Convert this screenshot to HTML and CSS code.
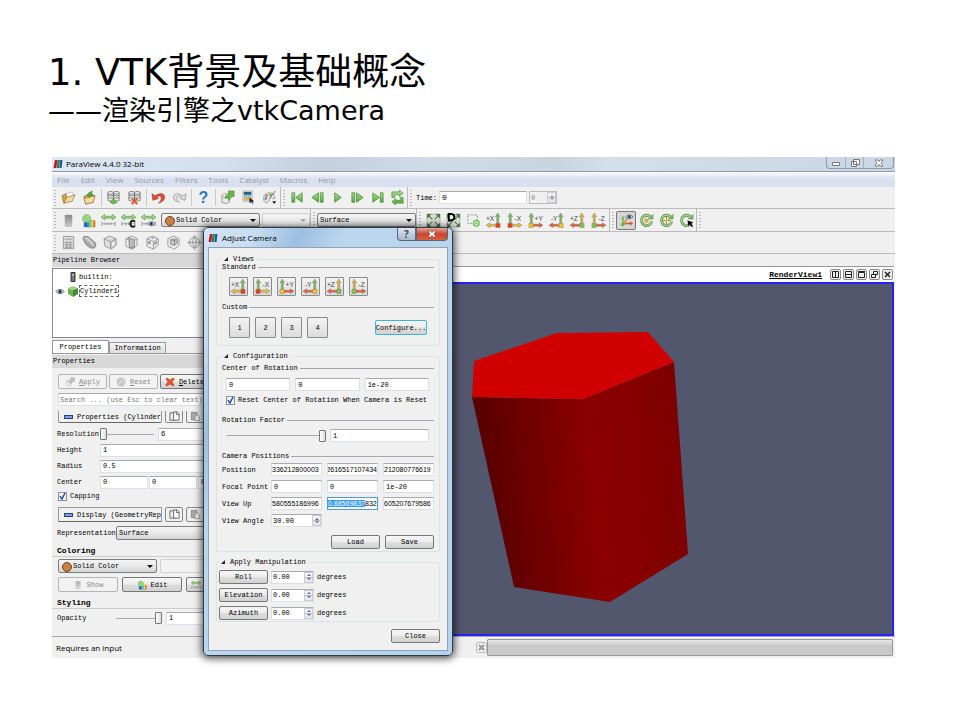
FILE: index.html
```html
<!DOCTYPE html>
<html lang="zh-CN">
<head>
    <meta charset="UTF-8">
    <meta name="viewport" content="width=device-width, initial-scale=1.0">
    <title>VTK背景及基础概念</title>
    <link rel="stylesheet" href="styles.css">
</head>
<body>
    <!-- shared icons -->
    <svg class="defs" aria-hidden="true">
        <defs>
            <linearGradient id="green" x1="0" y1="0" x2="0" y2="1"><stop offset="0" stop-color="#b5dc9c"/><stop offset="1" stop-color="#55a83a"/></linearGradient>
            <linearGradient id="grey" x1="0" y1="0" x2="0" y2="1"><stop offset="0" stop-color="#888"/><stop offset="1" stop-color="#ccc"/></linearGradient>
            <linearGradient id="rainbow"><stop offset="0" stop-color="#1b4fd0"/><stop offset=".4" stop-color="#35c4c0"/><stop offset=".7" stop-color="#f3d62a"/><stop offset="1" stop-color="#e8501c"/></linearGradient>
            <linearGradient id="side" gradientUnits="userSpaceOnUse" x1="35" y1="200" x2="230" y2="180"><stop offset="0" stop-color="#5a0000"/><stop offset=".55" stop-color="#8c0000"/><stop offset="1" stop-color="#7d0000"/></linearGradient>
        </defs>
        <symbol id="logo" viewBox="0 0 10 9"><path fill="#c8102e" d="M1.500 0h3L3 9H0z"/><path fill="#1f8a3b" d="M4.700 0h2.500L6 9H3.400z"/><path fill="#234f9e" d="M7.500 0H10L9 9H6.500z"/></symbol>
        <symbol id="folder" viewBox="0 0 16 16"><path fill="#fff" stroke="#999" stroke-width=".6" d="M5 4l7-2 2 5-8 3z"/><path fill="#d3a84f" stroke="#8a6a2c" stroke-width=".7" d="M1 6l4-2 1 3-2 7-1 0z"/><path fill="#f3dc9f" stroke="#8a6a2c" stroke-width=".7" d="M6 8l9-3-3 7-9 2z"/></symbol>
        <symbol id="folder-in" viewBox="0 0 16 16"><path fill="#d3a84f" stroke="#8a6a2c" stroke-width=".7" d="M2 7l4-2 7 1-1 7-8 2z"/><path fill="#f3dc9f" stroke="#8a6a2c" stroke-width=".7" d="M2 9l12-3-2 7-8 2z"/><path fill="#57ad35" stroke="#2f7a1d" stroke-width=".5" d="M8 8L5 5l2-.5V3l4-2-1 3 2 .5z"/></symbol>
        <symbol id="servers" viewBox="0 0 16 16"><g fill="#eee" stroke="#666" stroke-width=".8"><path d="M2 3v8q3 2 6 0V3"/><path d="M8 3v8q3 2 6 0V3"/><ellipse cx="5" cy="3" rx="3" ry="1.500"/><ellipse cx="11" cy="3" rx="3" ry="1.500"/><path fill="none" d="M2 5.500q3 2 6 0q3 2 6 0M2 8q3 2 6 0q3 2 6 0"/></g></symbol>
        <symbol id="undo" viewBox="0 0 16 16"><path fill="#df4f32" stroke="#9d2f1c" stroke-width=".6" d="M1 4l1 7 6-2-2-1.500q4-2.500 5 .5q.5 3-3 6q7-2 6.500-7Q13 1 4.500 6z"/></symbol>
        <symbol id="redo" viewBox="0 0 16 16"><path fill="#ddd" stroke="#999" stroke-width=".8" d="M15 4l-1 7-6-2 2-1.500q-4-2.500-5 .5q-.5 3 3 5q-7-1-6.500-6Q3 1 11.500 6z"/></symbol>
        <symbol id="source" viewBox="0 0 16 16"><path fill="#e9e9e9" stroke="#777" stroke-width=".7" d="M2 6v7q4 3 8 0V6"/><ellipse cx="6" cy="6" rx="4" ry="2" fill="#f8f8f8" stroke="#777" stroke-width=".7"/><path fill="#69b54b" stroke="#3d7f27" stroke-width=".6" d="M9 1h6v6h-2l-4 4v-3l-3 1V6l3-1z"/></symbol>
        <symbol id="pick" viewBox="0 0 16 16"><path fill="#8fc6cf" d="M3 2h8v9H3z"/><path fill="#315e82" d="M3 2h8v3H3z"/><path fill="#e8b04c" d="M3 8h8v3H3z"/><path stroke="#888" fill="none" stroke-dasharray="1 1" d="M2 1h10v11H2z"/><path fill="#222" d="M9 8l5 4-2 .4 1 2-1 .5-1-2-2 1z"/></symbol>
        <symbol id="palette" viewBox="0 0 16 16"><path fill="#e4e4e4" stroke="#888" stroke-width=".7" d="M2 12Q0 3 8 3q6 0 6 6-2 1-4-1-2 0-2 2t-3 4z"/><circle cx="5" cy="6" r="1.300" fill="#e64a2c"/><circle cx="4" cy="9" r="1.300" fill="#3f7fd2"/><circle cx="9" cy="5" r="1.300" fill="#5ab339"/><path stroke="#666" d="M14 1L8 9"/><path fill="#111" d="M11 12h4l-2 3z"/></symbol>
        <symbol id="first" viewBox="0 0 16 16"><path fill="url(#green)" stroke="#468c32" stroke-width=".8" d="M2 3h3v10H2zM13 3v10L6 8z"/></symbol>
        <symbol id="prev" viewBox="0 0 16 16"><path fill="url(#green)" stroke="#468c32" stroke-width=".8" d="M11 3h3v10h-3zM9 3v10L2 8z"/></symbol>
        <symbol id="play" viewBox="0 0 16 16"><path fill="url(#green)" stroke="#468c32" stroke-width=".8" d="M5 3v10l7-5z"/></symbol>
        <symbol id="next" viewBox="0 0 16 16"><path fill="url(#green)" stroke="#468c32" stroke-width=".8" d="M2 3h3v10H2zM7 3v10l7-5z"/></symbol>
        <symbol id="last" viewBox="0 0 16 16"><path fill="url(#green)" stroke="#468c32" stroke-width=".8" d="M11 3h3v10h-3zM3 3v10l7-5z"/></symbol>
        <symbol id="loop" viewBox="0 0 16 16"><path fill="url(#green)" stroke="#468c32" stroke-width=".7" d="M2 8V2h8V0l4 3.500L10 7V5H5v3zM14 8v6H6v2l-4-3.500L6 9v2h5V8z"/></symbol>
        <symbol id="bar" viewBox="0 0 16 16"><path fill="url(#grey)" d="M4 2h8v13H4z"/></symbol>
        <symbol id="cmap" viewBox="0 0 16 16"><path fill="url(#rainbow)" stroke="#876" stroke-width=".4" d="M5 8h10v7H5z"/><circle cx="6" cy="6" r="4.500" fill="#97d283" stroke="#69ab55" stroke-width=".5"/><path fill="#2d62c8" d="M3 10h3v5H3z"/></symbol>
        <symbol id="range" viewBox="0 0 16 16"><path fill="#9bd283" stroke="#4e9a39" stroke-width=".6" d="M0 4.500L4 1.500v2h8v-2l4 3-4 3v-2H4v2z"/><path fill="none" stroke="#888" stroke-width=".8" d="M1 9v5M5 10v3M8 10v3M11 10v3M15 9v5M1 11.500h14"/></symbol>
        <symbol id="eye" viewBox="0 0 16 10"><path fill="#ddd" stroke="#444" d="M1 5q7-7 14 0q-7 7-14 0z"/><circle cx="8" cy="5" r="3" fill="#345a8c"/><circle cx="8" cy="5" r="1.300" fill="#111"/></symbol>
        <symbol id="fit" viewBox="0 0 16 16"><path fill="#d8d8d8" stroke="#aaa" stroke-width=".6" d="M1 1h14v14H1z"/><path stroke="#4b7d37" stroke-width="1.200" d="M3 3l10 10M13 3L3 13"/><path fill="#4b7d37" d="M1 1h5L1 6zM15 1v5l-5-5zM1 15v-5l5 5zM15 15h-5l5-5z"/><circle cx="8" cy="8" r="1.500" fill="#eee"/></symbol>
        <symbol id="zoombox" viewBox="0 0 16 16"><path fill="none" stroke="#888" stroke-dasharray="2 1.500" d="M2 2h10v9H2z"/><circle cx="11" cy="11" r="3" fill="#fff" stroke="#6cbf4f" stroke-width="1.500"/><path stroke="#6cbf4f" d="M9.500 11h3M11 9.500v3"/></symbol>
        <!-- camera axis icons, colours come from the axis class -->
        <symbol id="axis-left" viewBox="0 0 16 16"><g stroke="#777" stroke-width=".5"><path fill="var(--up)" d="M12.500 0L15 4h-1.500v7h-2V4H10z"/><path fill="var(--across)" d="M0 13l4-2.500V12h7v2H4v1.500z"/><path fill="var(--corner)" d="M10.500 11h4.500v4.500h-4.500z"/></g></symbol>
        <symbol id="axis-right" viewBox="0 0 16 16"><g stroke="#777" stroke-width=".5"><path fill="var(--up)" d="M3.500 0L6 4H4.500v7h-2V4H1z"/><path fill="var(--across)" d="M16 13l-4-2.500V12H5v2h7v1.500z"/><path fill="var(--corner)" d="M1 11h4.500v4.500H1z"/></g></symbol>
        <symbol id="orient" viewBox="0 0 16 16"><path fill="#68b34b" d="M4 3l2 3H5v5H3.500V6H2z"/><path fill="#e4502b" d="M15 11l-3-2v1.500H6V12h6v1.500z"/><path stroke="#c89628" stroke-width="1.500" d="M4 12l5-6"/><circle cx="4" cy="12" r="2" fill="#68b34b"/><path fill="#ccc" stroke="#334" stroke-width=".6" d="M7 4q4-4 8 0q-4 4-8 0z"/><circle cx="11" cy="4" r="1.500" fill="#23406c"/></symbol>
        <symbol id="rotate" viewBox="0 0 16 16"><path fill="none" stroke="#568c43" stroke-width="3" d="M12 4a5.500 5.500 0 1 0 1.500 5"/><path fill="none" stroke="#a9d597" stroke-width="1.500" d="M12 4a5.500 5.500 0 1 0 1.500 5"/><path fill="#7cb868" stroke="#568c43" stroke-width=".6" d="M10 6.500h5V1.500z"/></symbol>
        <symbol id="calc" viewBox="0 0 16 16"><path fill="#ddd" stroke="#999" d="M2.500 1.500h11v13h-11z"/><path fill="none" stroke="#999" d="M4 4.500h8M4 8h8M4 10.500h8M4 13h8M6 7v7M10 7v7"/></symbol>
        <symbol id="contour" viewBox="0 0 16 16"><path fill="#aaa" stroke="#888" d="M1 4q0-4 6-2l7 6q2 4-1 6-4 1-9-4z"/><path fill="none" stroke="#e8e8e8" d="M3 4q3-2 6 2t3 6M5 5q2 0 3 2t3 3"/></symbol>
        <symbol id="cube" viewBox="0 0 16 16"><path fill="#ddd" stroke="#999" d="M1 4l6-3 7 3v7l-5 4-7-3zM1 4l7 3v8M8 7l6-3"/><path fill="#f4f4f4" stroke="#999" stroke-width=".6" d="M9 8l4-2v5l-4 2z"/></symbol>
        <symbol id="slice" viewBox="0 0 16 16"><path fill="#eee" stroke="#999" d="M2 4l6-3 6 3v7l-5 4-7-3zM2 4l7 3v8M9 7l5-3"/><path fill="#bbb" stroke="#888" d="M5 3l6 2v8l-5 1z"/></symbol>
        <symbol id="threshold" viewBox="0 0 16 16"><path fill="#eee" stroke="#999" d="M2 4l6-3 6 3v7l-5 4-7-3zM2 4l7 3v8M9 7l5-3"/><path fill="#999" d="M3 6l3 1v3l-3-1zM10 8l3-2v3l-3 2zM6 3l3-1 2 1-3 1z"/></symbol>
        <symbol id="subset" viewBox="0 0 16 16"><path fill="#eee" stroke="#999" d="M2 4l6-3 6 3v7l-5 4-7-3z"/><path fill="#ccc" stroke="#888" d="M5 5l4-1 3 1v4l-3 2-4-1zM5 5l4 1v5M9 6l3-1"/></symbol>
        <symbol id="sphere" viewBox="0 0 16 16"><path fill="#aaa" d="M8 0l2 3H6zM8 16l2-3H6zM0 8l3-2v4zM16 8l-3-2v4z"/><circle cx="8" cy="8" r="5.500" fill="#e6e6e6" stroke="#999"/><path fill="none" stroke="#999" d="M8 2.500q-4 5 0 11q4-6 0-11M2.500 8h11"/></symbol>
        <symbol id="green-cube" viewBox="0 0 12 12"><path fill="#6fb256" d="M1 3l5 2v7l-5-3z"/><path fill="#458a30" d="M6 5l5-2v6l-5 3z"/><path fill="#9bd384" d="M1 3l5-2 5 2-5 2z"/></symbol>
        <symbol id="copy" viewBox="0 0 12 12"><path fill="#eee" stroke="#555" stroke-width=".9" d="M1 2h4l2 2v6H1z"/><path fill="#fff" stroke="#555" stroke-width=".9" d="M5 1h4l2 2v7H5zM8 1v3h3"/></symbol>
        <symbol id="paste" viewBox="0 0 12 12"><path fill="#aaa" stroke="#888" d="M1.500 1.500h6v8h-6z"/><path fill="#eee" stroke="#999" d="M5.500 4.500h3l2 2v4h-5z"/></symbol>
        <symbol id="cross" viewBox="0 0 10 10"><path fill="#e8552f" stroke="#9f3418" stroke-width=".5" d="M1 2l1-1 3 2 3-2 1.500 1L7 5l2 3-1 1-3-2-3 2-1.500-1L3 5z"/></symbol>
        <symbol id="tick" viewBox="0 0 9 9"><path fill="none" stroke="#2d4f9e" stroke-width="1.500" d="M2 4l2 3 3-6"/></symbol>
    </svg>

    <header class="slide-title">
        <h1>1. VTK背景及基础概念</h1>
        <h2>——渲染引擎之vtkCamera</h2>
    </header>

    <main class="window">
        <div class="titlebar">
            <svg class="logo"><use href="#logo"/></svg>
            <span>ParaView 4.4.0 32-bit</span>
            <div class="caption-buttons">
                <button aria-label="Minimize"><svg viewBox="0 0 10 8"><path fill="#fff" stroke="#777" d="M1.500 3.500h7v3h-7z"/></svg></button>
                <button aria-label="Restore"><svg viewBox="0 0 10 8"><path fill="#fff" stroke="#777" d="M3.500.5h6v5h-6zM1.500 2.500h5v5h-5z"/></svg></button>
                <button class="wide" aria-label="Close"><svg viewBox="0 0 10 8"><path fill="#fff" stroke="#777" stroke-width=".9" d="M1 1h3l1 1.500L6 1h3L7 4l2 3H6L5 5.500 4 7H1l2-3z"/></svg></button>
            </div>
        </div>

        <nav class="menubar">
            <button>File</button><button>Edit</button><button>View</button><button>Sources</button><button>Filters</button><button>Tools</button><button>Catalyst</button><button>Macros</button><button>Help</button>
        </nav>

        <div class="toolbar">
            <div class="tools roomy">
                <button class="tool" aria-label="Open"><svg><use href="#folder"/></svg></button>
                <button class="tool" aria-label="Load state"><svg><use href="#folder-in"/></svg></button>
                <i class="rule"></i>
                <button class="tool" aria-label="Connect"><svg viewBox="0 0 16 16"><use href="#servers"/><path fill="#69bd45" stroke="#3d7f27" stroke-width=".5" d="M8 9l2 2v1l2 1-4 2-4-2 2-1v-1z"/></svg></button>
                <button class="tool" aria-label="Disconnect"><svg viewBox="0 0 16 16"><use href="#servers"/><path stroke="#e8552f" stroke-width="2" d="M5 9l6 6M11 9l-6 6"/></svg></button>
                <i class="rule"></i>
                <button class="tool" aria-label="Undo"><svg><use href="#undo"/></svg></button>
                <button class="tool" aria-label="Redo"><svg><use href="#redo"/></svg></button>
                <i class="rule"></i>
                <button class="tool help" aria-label="Help">?</button>
                <i class="rule"></i>
                <button class="tool" aria-label="Find data"><svg><use href="#source"/></svg></button>
                <button class="tool" aria-label="Select"><svg><use href="#pick"/></svg></button>
                <button class="tool" aria-label="Palette"><svg><use href="#palette"/></svg></button>
            </div>
            <div class="tools">
                <button class="tool" aria-label="First frame"><svg><use href="#first"/></svg></button>
                <button class="tool" aria-label="Previous frame"><svg><use href="#prev"/></svg></button>
                <button class="tool" aria-label="Play"><svg><use href="#play"/></svg></button>
                <button class="tool" aria-label="Next frame"><svg><use href="#next"/></svg></button>
                <button class="tool" aria-label="Last frame"><svg><use href="#last"/></svg></button>
                <button class="tool" aria-label="Loop"><svg><use href="#loop"/></svg></button>
            </div>
            <div class="tools time">
                <label for="time">Time:</label>
                <input type="text" id="time" value="0">
                <span class="spin disabled"><input type="text" value="0" aria-label="Time step" disabled><i></i></span>
            </div>
        </div>

        <div class="toolbar">
            <div class="tools">
                <button class="tool" aria-label="Color legend"><svg><use href="#bar"/></svg></button>
                <button class="tool" aria-label="Edit color map"><svg><use href="#cmap"/></svg></button>
                <button class="tool" aria-label="Rescale"><svg><use href="#range"/></svg></button>
                <button class="tool" aria-label="Rescale to custom range"><svg viewBox="0 0 16 16"><use href="#range"/><path fill="none" stroke="#111" stroke-width="2" d="M15 9q-5-2-5 2.500t5 2.500"/></svg></button>
                <button class="tool" aria-label="Rescale to visible range"><svg viewBox="0 0 16 16"><use href="#range"/><use href="#eye" x="6" y="8" width="10" height="7"/></svg></button>
                <span class="combo toolbar-combo with-dot"><select aria-label="Color by"><option>Solid Color</option></select></span>
                <span class="combo component-combo disabled"><select aria-label="Component" disabled><option></option></select></span>
            </div>
            <div class="tools">
                <span class="combo toolbar-combo"><select aria-label="Representation style"><option>Surface</option></select></span>
            </div>
            <div class="tools">
                <button class="tool" aria-label="Reset camera"><svg><use href="#fit"/></svg></button>
                <button class="tool" aria-label="Zoom to data"><svg viewBox="0 0 16 16"><use href="#fit"/><path fill="#eee" stroke="#000" stroke-width="2" d="M3 1h2q4 .5 4 3.500t-4 3.500H3z"/></svg></button>
                <button class="tool" aria-label="Zoom to box"><svg><use href="#zoombox"/></svg></button>
                <button class="tool axis x" aria-label="+X"><svg viewBox="0 0 16 16"><use href="#axis-left"/><text x="0" y="8">+X</text></svg></button>
                <button class="tool axis x" aria-label="-X"><svg viewBox="0 0 16 16"><use href="#axis-right"/><text x="8" y="8">-X</text></svg></button>
                <button class="tool axis y" aria-label="+Y"><svg viewBox="0 0 16 16"><use href="#axis-right"/><text x="7" y="8">+Y</text></svg></button>
                <button class="tool axis y" aria-label="-Y"><svg viewBox="0 0 16 16"><use href="#axis-left"/><text x="2" y="8">-Y</text></svg></button>
                <button class="tool axis z" aria-label="+Z"><svg viewBox="0 0 16 16"><use href="#axis-left"/><text x="0" y="8">+Z</text></svg></button>
                <button class="tool axis z" aria-label="-Z"><svg viewBox="0 0 16 16"><use href="#axis-right"/><text x="8" y="8">-Z</text></svg></button>
            </div>
            <div class="tools">
                <button class="tool pressed" aria-label="Show orientation axes"><svg><use href="#orient"/></svg></button>
                <button class="tool" aria-label="Show center"><svg viewBox="0 0 16 16"><use href="#rotate"/><circle cx="8" cy="8" r="2" fill="#f0b632" stroke="#a17a1a" stroke-width=".5"/></svg></button>
                <button class="tool" aria-label="Reset center"><svg viewBox="0 0 16 16"><use href="#rotate"/><path stroke="#a17a1a" d="M8 4v8M4 8h8"/><circle cx="8" cy="8" r="1.500" fill="#f0b632"/></svg></button>
                <button class="tool" aria-label="Pick center"><svg viewBox="0 0 16 16"><use href="#rotate"/><path fill="#000" d="M9 8l6 2-2 1 2 3-1.500 1-2-3L10 14z"/></svg></button>
            </div>
            <div class="tools"></div>
        </div>

        <div class="toolbar filters">
            <div class="tools roomy">
                <button class="tool" aria-label="Calculator"><svg><use href="#calc"/></svg></button>
                <button class="tool" aria-label="Contour"><svg><use href="#contour"/></svg></button>
                <button class="tool" aria-label="Clip"><svg><use href="#cube"/></svg></button>
                <button class="tool" aria-label="Slice"><svg><use href="#slice"/></svg></button>
                <button class="tool" aria-label="Threshold"><svg><use href="#threshold"/></svg></button>
                <button class="tool" aria-label="Extract subset"><svg><use href="#subset"/></svg></button>
                <button class="tool" aria-label="Glyph"><svg><use href="#sphere"/></svg></button>
            </div>
        </div>

        <div class="workspace">
            <aside class="dock">
                <div class="dock-title">Pipeline Browser</div>
                <ul class="tree">
                    <li><i></i><svg viewBox="0 0 12 12"><path fill="#777" stroke="#333" d="M4 1.500h4v9H4z"/><path stroke="#eee" d="M5 4h2"/></svg><span>builtin:</span></li>
                    <li class="current"><svg class="eye"><use href="#eye"/></svg><svg><use href="#green-cube"/></svg><span>Cylinder1</span></li>
                </ul>
                <div class="tabs">
                    <button class="active">Properties</button><button>Information</button>
                </div>
                <div class="dock-title">Properties</div>
                <div class="actions">
                    <button class="btn" disabled><svg><use href="#source"/></svg><span><u>A</u>pply</span></button>
                    <button class="btn" disabled><svg viewBox="0 0 10 10"><circle cx="5" cy="5" r="4.500" fill="#aaa"/><path stroke="#eee" d="M2 8l6-6"/></svg><span><u>R</u>eset</span></button>
                    <button class="btn"><svg><use href="#cross"/></svg><span><u>D</u>elete</span></button>
                </div>
                <input class="search" type="text" placeholder="Search ... (use Esc to clear text)" aria-label="Search">
                <div class="section cut">
                    <button class="section-name"><i></i>Properties (Cylinder</button>
                    <button class="mini" aria-label="Copy"><svg><use href="#copy"/></svg></button>
                    <button class="mini" aria-label="Paste"><svg><use href="#paste"/></svg></button>
                </div>
                <div class="prop"><label for="resolution">Resolution</label><span class="slider low"><i></i></span><input type="text" id="resolution" value="6"></div>
                <div class="prop"><label for="height">Height</label><input type="text" id="height" value="1"></div>
                <div class="prop"><label for="radius">Radius</label><input type="text" id="radius" value="0.5"></div>
                <div class="prop"><label for="center">Center</label><input class="third" type="text" id="center" value="0"><input class="third" type="text" value="0" aria-label="Center y"><input class="third" type="text" value="0" aria-label="Center z"></div>
                <label class="check"><input type="checkbox" checked><svg><use href="#tick"/></svg>Capping</label>
                <div class="section">
                    <button class="section-name"><i></i>Display (GeometryRep</button>
                    <button class="mini" aria-label="Copy"><svg><use href="#copy"/></svg></button>
                    <button class="mini" aria-label="Paste"><svg><use href="#paste"/></svg></button>
                </div>
                <div class="prop representation"><label for="rep">Representation</label><span class="combo"><select id="rep"><option>Surface</option></select></span></div>
                <h3>Coloring</h3>
                <div class="pair">
                    <span class="combo toolbar-combo with-dot"><select aria-label="Coloring"><option>Solid Color</option></select></span>
                    <span class="combo disabled"><select aria-label="Coloring component" disabled><option></option></select></span>
                </div>
                <div class="pair">
                    <button class="btn" disabled><svg><use href="#bar"/></svg>Show</button>
                    <button class="btn"><svg><use href="#cmap"/></svg>Edit</button>
                    <button class="btn scale" aria-label="Rescale"><svg><use href="#range"/></svg></button>
                </div>
                <h3>Styling</h3>
                <div class="prop opacity"><label for="opacity">Opacity</label><span class="slider"><i></i></span><input type="text" id="opacity" value="1"></div>
            </aside>

            <section class="view">
                <div class="view-header">
                    <a href="#">RenderView1</a>
                    <button aria-label="Split horizontal"><svg viewBox="0 0 9 9"><path d="M1.500 1.500h6v6h-6zM4.500 2v5"/></svg></button>
                    <button aria-label="Split vertical"><svg viewBox="0 0 9 9"><path d="M1.500 1.500h6v6h-6zM2 4.500h5"/></svg></button>
                    <button aria-label="Maximize"><svg viewBox="0 0 9 9"><path d="M1.500 2.500h6v5h-6zM1 1.500h7"/></svg></button>
                    <button aria-label="Restore"><svg viewBox="0 0 9 9"><path d="M3.500 1.500h4v3h-4zM1.500 4.500h4v3h-4z"/></svg></button>
                    <button aria-label="Close view"><svg viewBox="0 0 9 9"><path stroke-width="1.500" d="M2 2l5 5M7 2L2 7"/></svg></button>
                </div>
                <div class="canvas">
                    <svg viewBox="0 0 440 350" preserveAspectRatio="xMaxYMid meet" role="img" aria-label="Cylinder">
                        <polygon fill="url(#side)" points="20,113 131,115 222,78 236,270 158,318 62,303"/>
                        <polygon fill="#d00000" points="22,77 105,49 196,48 222,78 131,115 20,113"/>
                    </svg>
                </div>
            </section>
        </div>

        <footer class="statusbar">
            <span>Requires an input</span>
            <button aria-label="Abort"><svg viewBox="0 0 9 9"><path stroke="#999" stroke-width="2" d="M2 2l5 5M7 2L2 7"/></svg></button>
            <div class="progress"></div>
        </footer>

        <form class="dialog" onsubmit="return false">
            <div class="dialog-title">
                <svg class="logo"><use href="#logo"/></svg>
                <span>Adjust Camera</span>
                <button type="button" class="ask" aria-label="Help">?</button>
                <button type="button" class="close" aria-label="Close dialog"><svg viewBox="0 0 10 8"><path fill="#fff" stroke="#744" stroke-width=".6" d="M1 1h3l1 1.500L6 1h3L7 4l2 3H6L5 5.500 4 7H1l2-3z"/></svg></button>
            </div>
            <div class="dialog-body">
                <fieldset>
                    <legend>Views</legend>
                    <h4>Standard</h4>
                    <div class="standard">
                        <button type="button" class="square axis x" aria-label="+X"><svg viewBox="0 0 16 16"><use href="#axis-left"/><text x="0" y="8">+X</text></svg></button>
                        <button type="button" class="square axis x" aria-label="-X"><svg viewBox="0 0 16 16"><use href="#axis-right"/><text x="8" y="8">-X</text></svg></button>
                        <button type="button" class="square axis y" aria-label="+Y"><svg viewBox="0 0 16 16"><use href="#axis-right"/><text x="7" y="8">+Y</text></svg></button>
                        <button type="button" class="square axis y" aria-label="-Y"><svg viewBox="0 0 16 16"><use href="#axis-left"/><text x="2" y="8">-Y</text></svg></button>
                        <button type="button" class="square axis z" aria-label="+Z"><svg viewBox="0 0 16 16"><use href="#axis-left"/><text x="0" y="8">+Z</text></svg></button>
                        <button type="button" class="square axis z" aria-label="-Z"><svg viewBox="0 0 16 16"><use href="#axis-right"/><text x="8" y="8">-Z</text></svg></button>
                    </div>
                    <h4>Custom</h4>
                    <div class="custom">
                        <button type="button" class="slot">1</button>
                        <button type="button" class="slot">2</button>
                        <button type="button" class="slot">3</button>
                        <button type="button" class="slot">4</button>
                        <button type="button" class="btn configure">Configure...</button>
                    </div>
                </fieldset>

                <fieldset class="configuration">
                    <legend>Configuration</legend>
                    <h4>Center of Rotation</h4>
                    <div class="rotation">
                        <input type="text" value="0" aria-label="Rotation x">
                        <input type="text" value="0" aria-label="Rotation y">
                        <input type="text" value="1e-20" aria-label="Rotation z">
                    </div>
                    <label class="check"><input type="checkbox" checked><svg><use href="#tick"/></svg>Reset Center of Rotation When Camera is Reset</label>
                    <h4>Rotation Factor</h4>
                    <div class="factor"><span class="slider"><i></i></span><input type="text" value="1" aria-label="Rotation factor"></div>
                    <h4>Camera Positions</h4>
                    <div class="positions">
                        <label for="position">Position</label>
                        <input type="text" class="long" id="position" value="336212800003"><input type="text" class="long" value="2616517107434" dir="rtl" aria-label="Position y"><input type="text" class="long" value="212080776619" aria-label="Position z">
                        <label for="focal">Focal Point</label>
                        <input type="text" id="focal" value="0"><input type="text" value="0" aria-label="Focal y"><input type="text" value="1e-20" aria-label="Focal z">
                        <label for="viewup">View Up</label>
                        <input type="text" class="long" id="viewup" value="580555186996"><input type="text" class="long editing" id="viewup-y" value="0.88569837832" aria-label="View up y"><input type="text" class="long" value="605207679586" aria-label="View up z">
                        <label for="angle">View Angle</label>
                        <span class="spin"><input type="text" id="angle" value="30.00"><i></i></span>
                    </div>
                    <div class="load-save">
                        <button type="button" class="btn">Load</button>
                        <button type="button" class="btn">Save</button>
                    </div>
                </fieldset>

                <fieldset class="manipulation">
                    <legend>Apply Manipulation</legend>
                    <div><button type="button" class="btn">Roll</button><span class="spin"><input type="text" id="roll" value="0.00"><i></i></span><label for="roll">degrees</label></div>
                    <div><button type="button" class="btn">Elevation</button><span class="spin"><input type="text" id="elevation" value="0.00"><i></i></span><label for="elevation">degrees</label></div>
                    <div><button type="button" class="btn">Azimuth</button><span class="spin"><input type="text" id="azimuth" value="0.00"><i></i></span><label for="azimuth">degrees</label></div>
                </fieldset>
                <button type="button" class="btn close-button">Close</button>
            </div>
        </form>
    </main>

    <script>
        // the View Up field is being edited, part of its value is selected
        const viewUp = document.getElementById("viewup-y");
        viewUp.focus({ preventScroll: true });
        viewUp.setSelectionRange(0, 10, "backward");
    </script>
</body>
</html>
```
FILE: styles.css
```css
* {
    margin: 0;
    padding: 0;
    box-sizing: border-box;
}

body {
    background-color: #fff;
    padding: 50px 65px 40px 52px;
    color: #000;
}

button, input, select {
    font: inherit;
    color: inherit;
    min-width: 0;
    border-radius: 0;
}

button {
    background: none;
    border: none;
}

svg {
    display: block;
    flex: none;
}

.defs {
    position: absolute;
    width: 0;
    height: 0;
}

/* slide heading */
.slide-title {
    margin-left: -4px;
    margin-bottom: 30px;
    font-family: "DejaVu Sans", "Noto Sans CJK SC", sans-serif;
}

h1 {
    font-size: 37px;
    font-weight: normal;
    line-height: 45px;
}

h2 {
    font-size: 27px;
    font-weight: normal;
    line-height: 32px;
}

/* main window */
.window {
    position: relative;
    display: flex;
    flex-direction: column;
    background-color: #f0f0f0;
    font-family: "Liberation Mono", monospace;
    font-size: 7px;
    line-height: 8px;
}

.titlebar {
    display: flex;
    align-items: center;
    gap: 3px;
    height: 15px;
    padding-left: 1px;
    border-bottom: 1px solid #8e9aa6;
    background: linear-gradient(100deg, #dde8f3 0%, #d3e0ee 20%, #c3d0de 32%, #d0dce8 45%, #c8d4e0 60%, #d3dfea 66%, #c9d6e3 100%);
    font-family: "Open Sans", sans-serif;
    font-size: 8px;
}

.logo {
    width: 10px;
    height: 8px;
}

.caption-buttons {
    display: flex;
    align-self: flex-start;
    margin-left: auto;
    margin-right: 1px;
    border: 1px solid #8e9aa6;
    border-top: none;
    border-radius: 0 0 4px 4px;
}

.caption-buttons button {
    display: flex;
    justify-content: center;
    align-items: center;
    width: 18px;
    height: 11px;
}

.caption-buttons button + button {
    border-left: 1px solid #a5b0bb;
}

.caption-buttons .wide {
    width: 30px;
}

.caption-buttons svg {
    width: 10px;
    height: 8px;
}

.menubar {
    display: flex;
    gap: 11px;
    height: 15px;
    padding-left: 5px;
    background: linear-gradient(#fbfcfe, #dde2f1 40%, #d8def0);
    color: #949aa2;
    font-family: "Open Sans", sans-serif;
    font-size: 8px;
}

.toolbar {
    display: flex;
    height: 22px;
    border-bottom: 1px solid #bbb;
}

.toolbar + .toolbar {
    height: 23px;
}

.toolbar + .filters {
    height: 22px;
}

.workspace {
    display: flex;
    min-height: 382px;
}

.tools {
    display: flex;
    align-items: center;
    padding-left: 2px;
    border-right: 1px solid #bbb;
}

.tools:last-child {
    border-right: none;
}

.tools::before {
    content: "";
    align-self: stretch;
    width: 2px;
    margin: 3px 2px 2px 0;
    background: repeating-linear-gradient(#b5b5b5 0 1px, #f0f0f0 1px 3px);
}

.tool {
    display: flex;
    justify-content: center;
    align-items: center;
    width: 20px;
    height: 19px;
}

.roomy .tool, .tool.axis {
    width: 21px;
}

.tool svg {
    width: 15px;
    height: 15px;
}

.rule {
    width: 1px;
    height: 17px;
    margin: 0 1px;
    background-color: #c8c8c8;
}

.help {
    display: block;
    color: #2c78bd;
    font-family: "Liberation Sans", sans-serif;
    font-size: 16px;
    font-weight: bold;
    line-height: 16px;
}

.pressed {
    border: 1px solid #777;
    border-radius: 2px;
    background-color: #d6d6d6;
}

.axis text {
    font-family: "Liberation Sans", sans-serif;
    font-size: 7px;
    fill: #444;
}

.axis.x { --up: #74bc58; --corner: #f23b0c; --across: #f0bf3c; }
.axis.y { --up: #74bc58; --corner: #fcc419; --across: #ee5a36; }
.axis.z { --up: #e9b03a; --corner: #83c444; --across: #ee5a36; }

input[type="text"] {
    height: 13px;
    padding: 0 2px;
    border: 1px solid #dcdfe6;
    border-top-color: #a9abb2;
    background-color: #fff;
    outline: none;
}

.time {
    gap: 2px;
}

.time > input[type="text"] {
    width: 88px;
    font-size: 8px;
}

.spin {
    display: flex;
    height: 13px;
    border: 1px solid #dcdfe6;
    border-top-color: #a9abb2;
    background-color: #fff;
}

.spin input[type="text"] {
    flex: 1;
    height: auto;
    padding: 0 1px;
    border: none;
    background: none;
}

.spin i {
    display: flex;
    flex-direction: column;
    justify-content: space-evenly;
    align-items: center;
    width: 9px;
    border: 1px solid #c9ccd6;
    background: linear-gradient(#f4f4f6 45%, #bbb 45% 55%, #e8e8ec 55%);
}

.spin i::before, .spin i::after {
    content: "";
    border: 2px solid transparent;
    border-top: none;
    border-bottom: 2px solid #5670b8;
}

.spin i::after {
    border-bottom: none;
    border-top: 2px solid #5670b8;
}

.time .spin {
    width: 28px;
}

.spin.disabled {
    border-color: #bbb;
    background-color: #f0f0f0;
    color: #888;
}

.spin.disabled i::before, .spin.disabled i::after {
    border-bottom-color: #999;
    border-top-color: #999;
}

.combo {
    position: relative;
    display: flex;
    height: 14px;
}

.combo select {
    appearance: none;
    flex: 1;
    padding: 0 10px 0 2px;
    border: 1px solid #7c7c7c;
    border-radius: 2px;
    background: linear-gradient(#f5f5f5, #e8e8e8 50%, #d4d4d4);
}

.combo::after {
    content: "";
    position: absolute;
    right: 4px;
    top: 6px;
    border: 3px solid transparent;
    border-top-color: #111;
    border-bottom: none;
}

.combo.disabled select {
    border-color: #c4c4c4;
    background: #f3f3f3;
}

.combo.disabled::after {
    border-top-color: #aaa;
}

.toolbar-combo {
    width: 99px;
}

.component-combo {
    width: 48px;
    margin-left: 2px;
}

.tools .with-dot {
    margin-left: 3px;
}

.combo.with-dot select {
    padding-left: 14px;
}

.with-dot::before {
    content: "";
    position: absolute;
    left: 4px;
    top: 3px;
    width: 8px;
    height: 8px;
    border: 1px solid #6b4420;
    border-radius: 50%;
    background-color: #c98043;
}

/* left dock */
.dock {
    flex: none;
    width: 210px;
    overflow: hidden;
}

.dock-title {
    height: 13px;
    padding: 2px 1px 0;
    background-color: #d8d8d8;
}

.tree {
    height: 70px;
    margin-top: 1px;
    padding-top: 1px;
    border: 1px solid #828790;
    background-color: #fff;
    list-style: none;
}

.tree li {
    display: flex;
    align-items: center;
    height: 14px;
    padding-left: 2px;
}

.tree i, .tree .eye {
    width: 10px;
    height: 7px;
    margin-right: 2px;
}

.tree svg {
    width: 12px;
    height: 12px;
}

.current span {
    padding: 1px 0;
    border: 1px dashed #666;
}

.tree svg.eye {
    width: 10px;
}

.tabs {
    display: flex;
    align-items: flex-end;
    height: 16px;
    border-bottom: 1px solid #999;
    margin-bottom: 1px;
}

.tabs button {
    width: 57px;
    height: 11px;
    border: 1px solid #999;
    border-bottom: none;
    background: linear-gradient(#f4f4f4, #ddd);
}

.tabs .active {
    height: 13px;
    background: #fff;
}

.actions, .pair, .section {
    display: flex;
    gap: 3px;
    padding-left: 6px;
}

.actions {
    padding-top: 6px;
    gap: 2px;
}

.btn {
    display: flex;
    flex: none;
    justify-content: center;
    align-items: center;
    gap: 4px;
    width: 49px;
    height: 15px;
    border: 1px solid #777;
    border-radius: 2px;
    background: linear-gradient(#f6f6f6, #ececec 48%, #dedede 52%, #d2d2d2);
}

.btn:disabled {
    border-color: #b5b5b5;
    background: #f2f2f2;
    color: #888;
}

.btn:disabled svg {
    filter: grayscale(1);
    opacity: .6;
}

.btn svg {
    width: 10px;
    height: 10px;
}

.dock input.search {
    display: block;
    width: 220px;
    margin: 4px 0 5px 6px;
    padding: 0 1px;
}

.search::placeholder {
    color: #777;
    opacity: 1;
}

.section-name {
    width: 104px;
    height: 15px;
    padding-left: 5px;
    border: 1px solid #999;
    border-bottom-color: #666;
    text-align: left;
    white-space: nowrap;
}

.section-name i {
    display: inline-block;
    width: 9px;
    height: 4px;
    margin-right: 4px;
    border: 1px solid #27417f;
    background-color: #7da0e2;
}

.mini {
    display: flex;
    justify-content: center;
    align-items: center;
    width: 18px;
    height: 15px;
    border: 1px solid #888;
    border-radius: 2px;
}

.mini svg {
    width: 11px;
    height: 11px;
}

.cut {
    margin-bottom: 3px;
}

/* the top edge is scrolled out of the area */
.cut .section-name, .cut .mini {
    height: 12px;
    border-top: none;
    border-radius: 0 0 2px 2px;
}

.prop {
    display: flex;
    align-items: center;
    height: 16px;
    padding-left: 5px;
}

.prop label {
    width: 43px;
}

.prop input {
    flex: 1;
}

.prop .third {
    flex: none;
    width: 48px;
    margin-right: 1px;
}

.slider {
    display: flex;
    justify-content: flex-end;
    align-items: center;
    height: 13px;
    background: linear-gradient(#aaa, #aaa) center / 100% 1px no-repeat;
}

.slider.low {
    justify-content: flex-start;
}

.slider i {
    width: 7px;
    height: 12px;
    border: 1px solid #777;
    border-radius: 1px;
    background: linear-gradient(90deg, #fff, #ddd);
}

.prop .slider {
    width: 54px;
    margin-right: 4px;
}

.check {
    display: flex;
    align-items: center;
    gap: 3px;
    height: 10px;
    white-space: nowrap;
}

.check input {
    appearance: none;
    width: 9px;
    height: 9px;
    border: 1px solid #8a8f98;
    background-color: #f5f7fa;
}

.check svg {
    width: 9px;
    height: 9px;
    margin-left: -12px;
}

.dock .check {
    margin: 1px 0 6px 6px;
}

.representation label {
    width: 59px;
}

.representation {
    margin-top: 3px;
}

.representation .combo {
    flex: 1;
}

h3 {
    height: 13px;
    padding: 3px 5px 0;
    border-bottom: 1px solid #ccc;
    font-size: 8px;
    line-height: 8px;
}

.representation + h3 {
    margin-top: 3px;
}

.pair {
    padding-top: 2px;
}

.pair + h3 {
    margin-top: 4px;
}

.pair .btn {
    width: 60px;
}

.pair + .pair {
    padding-top: 4px;
    gap: 4px;
}

.pair .btn.scale {
    justify-content: flex-start;
    padding-left: 4px;
}

.pair > .combo.disabled {
    width: 90px;
}

.opacity {
    margin-top: 1px;
}

.opacity label {
    width: 59px;
}

.opacity .slider {
    width: 46px;
}

/* render view */
.view {
    flex: 1;
    display: flex;
    flex-direction: column;
    min-width: 0;
    padding-top: 12px;
    padding-right: 1px;
}

.view-header {
    display: flex;
    justify-content: flex-end;
    align-items: center;
    gap: 2px;
    height: 16px;
    padding-right: 1px;
    border-top: 1px solid #999;
    background-color: #fff;
}

.view-header a {
    margin-right: 6px;
    color: #000;
    font-size: 8px;
    font-weight: bold;
}

.view-header button {
    width: 11px;
    height: 11px;
    border: 1px solid #888;
    border-radius: 2px;
    background-color: #eee;
}

.view-header svg {
    width: 9px;
    height: 9px;
    fill: none;
    stroke: #222;
}

.canvas {
    position: relative;
    flex: 1;
    border: 2px solid #2323f5;
    background-color: #52576e;
}

/* the scene fills the canvas without giving it a height */
.canvas svg {
    position: absolute;
    inset: 0;
    width: 100%;
    height: 100%;
}

.statusbar {
    display: flex;
    align-items: center;
    height: 22px;
    padding: 0 2px 0 4px;
    border-top: 1px solid #aaa;
    font-family: "Open Sans", sans-serif;
    font-size: 8px;
}

.statusbar span {
    width: 420px;
}

.statusbar button {
    width: 11px;
    height: 11px;
    border: 1px solid #bbb;
    border-radius: 2px;
}

.progress {
    flex: 1;
    height: 17px;
    border: 1px solid #999;
    border-radius: 1px;
    background: linear-gradient(#e6e6e6, #c9c9c9 40%, #c9c9c9);
}

/* camera dialog */
.dialog {
    position: absolute;
    left: 151px;
    top: 70px;
    width: 250px;
    padding: 0 4px 4px;
    border: 1px solid #2e3a46;
    border-radius: 5px;
    background: linear-gradient(115deg, #d4e5f5, #c6dcf1 12%, #9cbfdf 22%, #bcd6ee 32%, #b6d1eb);
    box-shadow: 0 1px 9px 1px rgba(0, 0, 0, 0.75);
}

.dialog-title {
    display: flex;
    align-items: center;
    gap: 4px;
    height: 19px;
    font-family: "Open Sans", sans-serif;
    font-size: 8px;
}

.dialog-title span {
    margin-right: auto;
}

.dialog-title button {
    display: flex;
    justify-content: center;
    align-items: center;
    align-self: flex-start;
    width: 19px;
    height: 13px;
    border: 1px solid #56677a;
    border-top: none;
    border-radius: 0 0 0 4px;
    background: linear-gradient(#dbe5ef, #a7b9cb);
    font-size: 10px;
    font-weight: bold;
    color: #445;
}

.dialog-title .close {
    width: 32px;
    margin-left: -4px;
    border-radius: 0 0 4px 0;
    background: linear-gradient(#e3a79a, #c9452c 50%, #d9603f);
}

.dialog-title .close svg {
    width: 10px;
    height: 8px;
}

.dialog-body {
    display: flex;
    flex-direction: column;
    min-height: 404px;
    padding: 7px;
    border: 1px solid #8fa3b8;
    background-color: #f0f0f0;
}

fieldset {
    min-width: 0;
    padding: 0 5px 7px;
    border: 1px solid #dbe3e6;
    border-radius: 2px;
}

legend {
    margin-left: 1px;
    padding: 0 3px 0 1px;
}

legend::before {
    content: "";
    display: inline-block;
    margin-right: 5px;
    border-left: 4px solid transparent;
    border-bottom: 4px solid #222;
}

h4 {
    display: flex;
    align-items: center;
    gap: 2px;
    height: 8px;
    font-weight: normal;
}

h4::after {
    content: "";
    flex: 1;
    height: 1px;
    background-color: #a5a5a5;
}

.standard, .custom {
    display: flex;
    gap: 5px;
    margin: 6px 7px 7px;
}

.custom {
    align-items: center;
    margin-bottom: 0;
}

.square, .slot {
    display: flex;
    justify-content: center;
    align-items: center;
    width: 19px;
    height: 19px;
    border: 1px solid #8a8a8a;
    border-radius: 1px;
    background: linear-gradient(#f3f3f3, #dcdcdc);
}

.square svg {
    width: 15px;
    height: 15px;
}

.slot {
    width: 21px;
    height: 21px;
}

.configure {
    width: 52px;
    margin-left: auto;
    border-color: #3bb3dc;
}

.configuration {
    margin-top: 6px;
    padding-bottom: 2px;
}

.configuration legend + h4 {
    margin-top: 4px;
}

.rotation {
    display: flex;
    gap: 5px;
    margin: 6px 5px 4px 4px;
}

.rotation input {
    flex: 1;
}

.configuration .check {
    margin: 0 0 11px 4px;
}

.factor {
    display: flex;
    gap: 4px;
    margin: 5px 5px 10px 4px;
}

.factor .slider {
    width: 100px;
}

.factor input {
    flex: 1;
}

.positions {
    display: grid;
    grid-template-columns: 44px repeat(3, 51px);
    align-items: center;
    gap: 4px 5px;
    margin-top: 3px;
}

.positions label {
    white-space: nowrap;
}

.positions input[type="text"] {
    width: 100%;
}

.positions input.long {
    padding: 0;
    font-family: "Liberation Sans", sans-serif;
}

.positions input.editing {
    border-color: #4f9bd0;
}

.editing::selection {
    background-color: #3399ff;
    color: #fff;
}

.load-save {
    display: flex;
    justify-content: flex-end;
    gap: 5px;
    margin-top: 8px;
}

.load-save .btn, .manipulation .btn {
    height: 14px;
}

.manipulation {
    margin-top: 6px;
    padding: 4px 2px 1px;
}

.manipulation div {
    display: flex;
    align-items: center;
    gap: 3px;
    margin-bottom: 4px;
}

.manipulation div:last-child {
    margin-bottom: 0;
}

.manipulation .spin {
    width: 43px;
}

.close-button {
    height: 14px;
    margin-top: 7px;
    margin-left: auto;
}
```
